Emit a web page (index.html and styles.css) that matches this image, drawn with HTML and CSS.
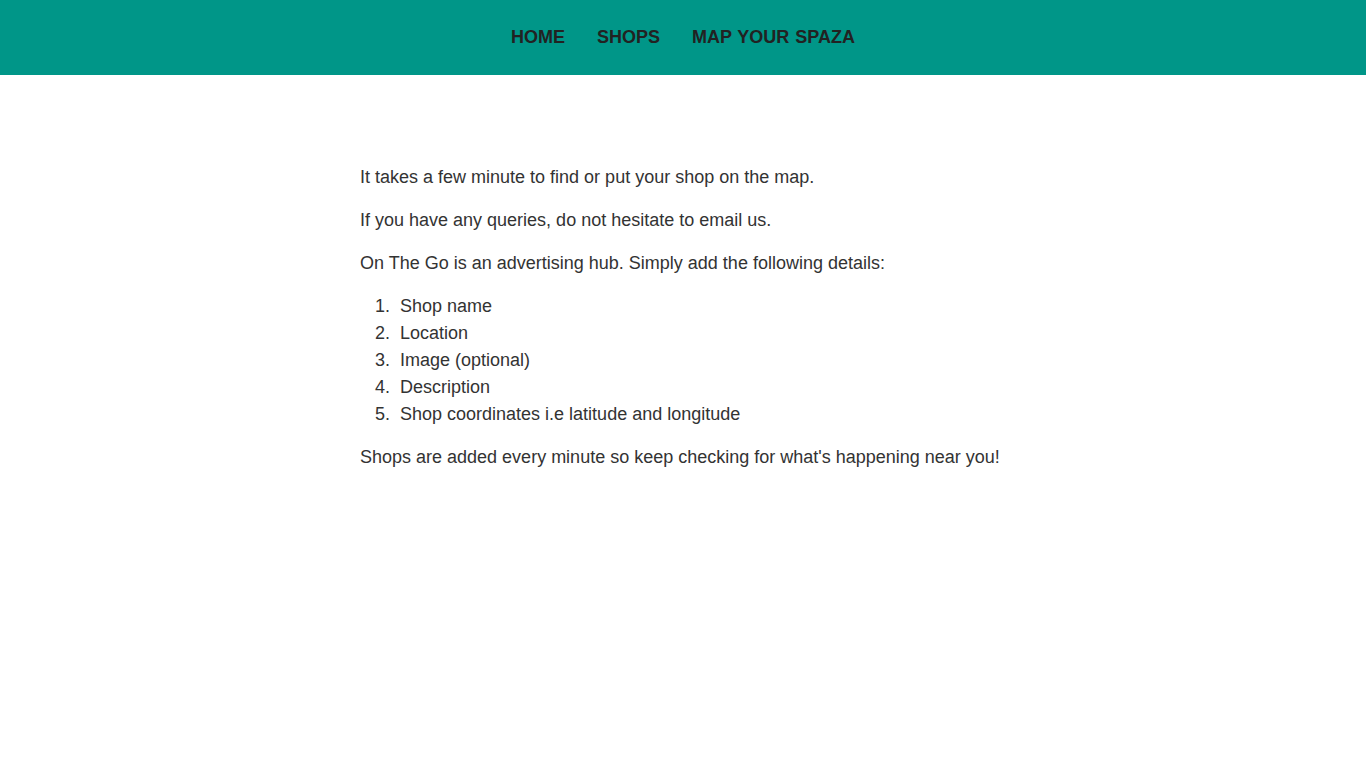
FILE: index.html
```html
<!DOCTYPE html>
<html lang="en">
<head>
<meta charset="utf-8">
<title>On The Go</title>
<link rel="stylesheet" href="styles.css">
</head>
<body>
<header class="topbar">
  <nav class="nav">
    <a class="nav-link" href="#">HOME</a>
    <a class="nav-link" href="#">SHOPS</a>
    <a class="nav-link" href="#">MAP YOUR SPAZA</a>
  </nav>
</header>
<main class="content">
  <p class="text">It takes a few minute to find or put your shop on the map.</p>
  <p class="text">If you have any queries, do not hesitate to email us.</p>
  <p class="text">On The Go is an advertising hub. Simply add the following details:</p>
  <ol class="steps">
    <li class="step">Shop name</li>
    <li class="step">Location</li>
    <li class="step">Image (optional)</li>
    <li class="step">Description</li>
    <li class="step">Shop coordinates i.e latitude and longitude</li>
  </ol>
  <p class="text">Shops are added every minute so keep checking for what's happening near you!</p>
</main>
</body>
</html>
```
FILE: styles.css
```css
html, body {
  margin: 0;
  padding: 0;
  background: #ffffff;
}
body {
  font-family: "Liberation Sans", Arial, sans-serif;
  font-size: 18px;
  line-height: 27px;
  color: #333333;
}
.topbar {
  background: #009688;
  height: 75px;
  box-sizing: border-box;
  padding-bottom: 2px;
  display: flex;
  align-items: center;
  justify-content: center;
}
.nav {
  display: flex;
  gap: 32px;
}
.nav-link {
  color: #222222;
  text-decoration: none;
  font-weight: bold;
  font-size: 18px;
  line-height: 24px;
  word-spacing: 1px;
}
.content {
  max-width: 646px;
  margin: 0 auto;
  padding-top: 89px;
}
.text {
  margin: 0 0 16px;
}
.steps {
  margin: 0 0 16px;
  padding-left: 40px;
  list-style: none;
  counter-reset: step;
}
.step {
  counter-increment: step;
}
.step::before {
  content: counter(step) ".";
  display: inline-block;
  width: 30px;
  margin-left: -40px;
  margin-right: 10px;
  text-align: right;
}
```
